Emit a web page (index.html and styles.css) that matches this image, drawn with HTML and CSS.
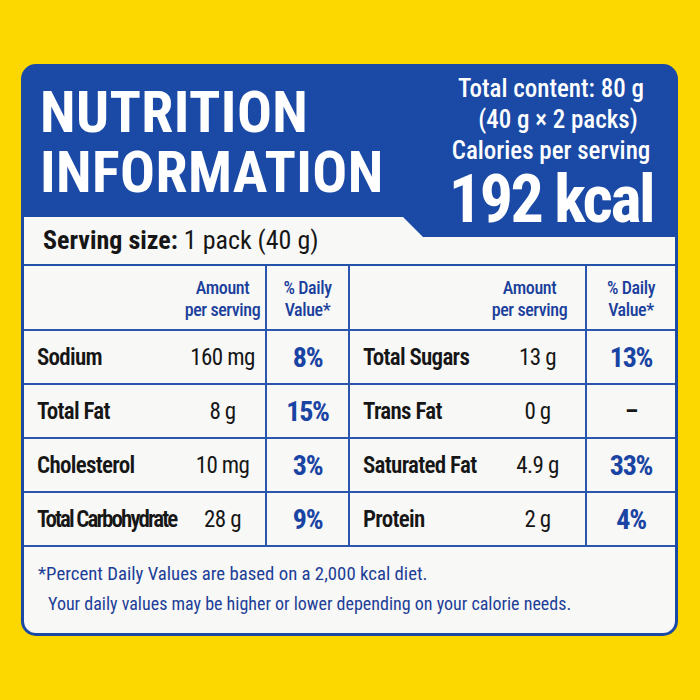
FILE: index.html
```html
<!DOCTYPE html>
<html lang="en">
<head>
<meta charset="utf-8">
<title>Nutrition Information</title>
<link rel="stylesheet" href="styles.css">
</head>
<body>
<div class="card">
  <header class="head">
    <h1 class="title"><span class="title-line">NUTRITION</span><span class="title-line">INFORMATION</span></h1>
    <div class="summary">
      <p class="line">Total content: 80 g</p>
      <p class="line shift">(40 g × 2 packs)</p>
      <p class="line">Calories per serving</p>
      <p class="kcal">192 kcal</p>
    </div>
  </header>
  <section class="panel">
    <div class="serving"><b>Serving size:</b> 1 pack (40 g)</div>
    <div class="grid">
      <div class="cell hd"></div>
      <div class="cell hd amt sep">Amount<br>per serving</div>
      <div class="cell hd dv sep">% Daily<br>Value*</div>
      <div class="cell hd"></div>
      <div class="cell hd amt amt-r sep">Amount<br>per serving</div>
      <div class="cell hd dv">% Daily<br>Value*</div>

      <div class="cell name">Sodium</div>
      <div class="cell val sep">160 mg</div>
      <div class="cell pct sep">8%</div>
      <div class="cell name">Total Sugars</div>
      <div class="cell val sep">13 g</div>
      <div class="cell pct">13%</div>

      <div class="cell name">Total Fat</div>
      <div class="cell val sep">8 g</div>
      <div class="cell pct sep">15%</div>
      <div class="cell name">Trans Fat</div>
      <div class="cell val sep">0 g</div>
      <div class="cell pct none">–</div>

      <div class="cell name">Cholesterol</div>
      <div class="cell val sep">10 mg</div>
      <div class="cell pct sep">3%</div>
      <div class="cell name">Saturated Fat</div>
      <div class="cell val sep">4.9 g</div>
      <div class="cell pct">33%</div>

      <div class="cell name squeeze">Total Carbohydrate</div>
      <div class="cell val sep">28 g</div>
      <div class="cell pct sep">9%</div>
      <div class="cell name">Protein</div>
      <div class="cell val sep">2 g</div>
      <div class="cell pct">4%</div>
    </div>
    <div class="note">
      <p class="note-line">*Percent Daily Values are based on a 2,000 kcal diet.</p>
      <p class="note-line sub">Your daily values may be higher or lower depending on your calorie needs.</p>
    </div>
  </section>
</div>
</body>
</html>
```
FILE: styles.css
```css
* { box-sizing: border-box; }

html, body {
  margin: 0;
  background: #fcd700;
}

body {
  padding: 64px 22px 0 21px;
  font-family: "Roboto Condensed", "Roboto", "Liberation Sans", sans-serif;
  color: #161616;
}

p, h1 { margin: 0; }

.card {
  width: 657px;
  background: #1a4aa6;
  border-radius: 15px;
  padding: 0 3px 3px 3px;
}

/* ---------- header ---------- */
.head {
  position: relative;
  z-index: 1;
  height: 153px;
  display: flex;
  justify-content: space-between;
  align-items: flex-start;
  padding: 0 9px 0 16px;
  color: #fff;
}

.title {
  margin-top: 22px;
  font-size: 58px;
  font-weight: 700;
  letter-spacing: 0.4px;
  display: flex;
  flex-direction: column;
  gap: 8px;
}

.title-line {
  display: block;
  line-height: 52px;
}

.summary {
  margin-top: 9px;
  width: 230px;
  text-align: center;
}

.line {
  font-size: 25px;
  line-height: 31px;
  font-weight: 500;
}

.line.shift { padding-left: 14px; }

.kcal {
  margin-top: 14px;
  font-size: 66px;
  line-height: 40px;
  font-weight: 700;
  letter-spacing: -2.5px;
}

/* ---------- white panel ---------- */
.panel {
  position: relative;
  background: #f8f8f6;
  border-radius: 0 0 12px 12px;
}

.panel::before {
  content: "";
  position: absolute;
  top: 0;
  right: 0;
  width: 272px;
  height: 20px;
  background: #1a4aa6;
  clip-path: polygon(0 0, 100% 0, 100% 100%, 20px 100%);
}

.serving {
  height: 49px;
  padding-left: 19px;
  font-size: 26px;
  line-height: 47px;
  border-bottom: 2px solid #2452a9;
}

.serving b { font-weight: 700; }

/* ---------- table grid ---------- */
.grid {
  display: grid;
  grid-template-columns: 156px 87px 83px 140px 97px 88px;
  grid-template-rows: 65px repeat(4, 54px);
}

.cell {
  display: flex;
  align-items: center;
  border-bottom: 2px solid #2a57ad;
}

.sep { border-right: 2px solid #2a57ad; }

.hd {
  justify-content: center;
  text-align: center;
  color: #1b3f9c;
  font-size: 18px;
  line-height: 22px;
  font-weight: 500;
  letter-spacing: -0.4px;
  padding-top: 2px;
}

.amt-r { padding-right: 16px; }

.name {
  padding-left: 13px;
  font-size: 23px;
  font-weight: 600;
  letter-spacing: -0.7px;
  white-space: nowrap;
}

.squeeze { letter-spacing: -1.9px; }

.val {
  justify-content: center;
  font-size: 23px;
  font-weight: 400;
  letter-spacing: -0.6px;
  white-space: nowrap;
}

.pct {
  justify-content: center;
  color: #1a44a3;
  font-size: 28px;
  font-weight: 700;
  letter-spacing: -1.2px;
}

.none {
  color: #161616;
  font-size: 24px;
}

/* ---------- footnote ---------- */
.note {
  padding: 12px 0 14px 14px;
  color: #1d3e98;
  font-size: 18.8px;
  line-height: 30px;
}

.note-line.sub {
  padding-left: 10px;
  font-size: 18px;
}
```
